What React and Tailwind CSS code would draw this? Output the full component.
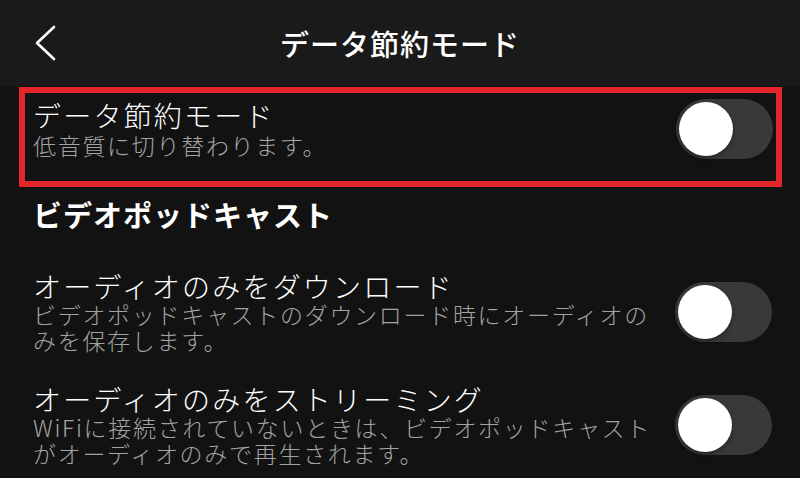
export default function App() {
  const Toggle = () => (
    <div className="w-[97px] h-[60px] shrink-0 rounded-full bg-[#39393c] p-[3px] flex items-center">
      <div className="w-[54px] h-[54px] rounded-full bg-white shadow-[0_2px_4px_rgba(0,0,0,0.4)]" />
    </div>
  );

  const label = "text-[28px] leading-[30px] tracking-[2.2px] font-light";
  const sub = "text-[23px] leading-[26px] tracking-[1.7px] font-light text-[#a3a3a3]";

  return (
    <div className="w-[800px] h-[478px] overflow-hidden bg-[#121212] text-white font-['Noto_Sans_CJK_JP','Noto_Sans',sans-serif]">
      {/* Header bar */}
      <div className="h-[86px] bg-[#1a1a1a] grid grid-cols-[1fr_auto_1fr] items-center px-[34px]">
        <svg width="24" height="38" viewBox="0 0 24 38" fill="none" className="justify-self-start">
          <path d="M20 3 L3 19 L20 35" stroke="white" strokeWidth="2.6" strokeLinecap="round" strokeLinejoin="round" />
        </svg>
        <div className="text-[29px] leading-[36px] tracking-[1px] font-medium">データ節約モード</div>
        <div />
      </div>

      {/* Data saver row, outlined */}
      <div className="mt-px ml-[19px] mr-[18px] border-[6px] border-[#e3242b] flex items-center pl-[8px] pr-[3px] pt-[6px] pb-[22px]">
        <div className="flex-1 whitespace-nowrap">
          <div className={label}>データ節約モード</div>
          <div className={`${sub} mt-[2px]`}>低音質に切り替わります。</div>
        </div>
        <Toggle />
      </div>

      {/* Video podcast section */}
      <div className="mt-[9px] pl-[33px] pr-[28px]">
        <div className="text-[29px] leading-[36px] tracking-[1px] font-bold">ビデオポッドキャスト</div>

        <div className="mt-[39px] flex items-center">
          <div className="flex-1 whitespace-nowrap">
            <div className={label}>オーディオのみをダウンロード</div>
            <div className={sub}>
              ビデオポッドキャストのダウンロード時にオーディオの
              <br />
              みを保存します。
            </div>
          </div>
          <Toggle />
        </div>

        <div className="mt-[31px] flex items-center">
          <div className="flex-1 whitespace-nowrap">
            <div className={label}>オーディオのみをストリーミング</div>
            <div className={sub}>
              WiFiに接続されていないときは、ビデオポッドキャスト
              <br />
              がオーディオのみで再生されます。
            </div>
          </div>
          <Toggle />
        </div>
      </div>
    </div>
  );
}
